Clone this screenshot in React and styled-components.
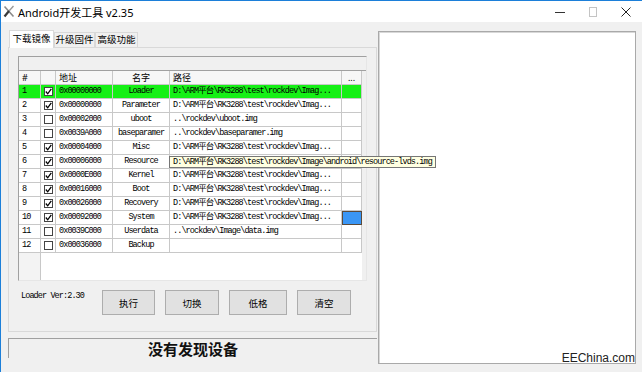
import React from "react";
import styled, { createGlobalStyle } from "styled-components";

const GlobalStyle = createGlobalStyle`
  html, body {
    margin: 0;
    padding: 0;
    background: #f0f0f0;
    overflow: hidden;
  }
`;

const mono = `"Liberation Mono", "Noto Sans CJK SC", monospace`;
const sans = `"Noto Sans", "Noto Sans CJK SC", sans-serif`;

const Window = styled.div`
  width: 642px;
  height: 372px;
  box-sizing: border-box;
  border-top: 1px solid #1c7fd9;
  border-left: 1px solid #1c7fd9;
  background: #f0f0f0;
  display: flex;
  flex-direction: column;
  font-family: ${sans};
`;

const TitleBar = styled.div`
  height: 21px;
  flex-shrink: 0;
  background: #fff;
  display: flex;
  align-items: center;
`;

const Title = styled.span`
  flex: 1;
  margin-left: 3px;
  font-size: 11px;
  color: #000;
`;

const Controls = styled.div`
  display: flex;
`;

const Ctl = styled.div`
  width: 33px;
  height: 21px;
  display: flex;
  align-items: center;
  justify-content: center;
`;

const Body = styled.div`
  flex: 1;
  display: flex;
  padding: 8px 0 0 7px;
`;

const LeftCol = styled.div`
  width: 369px;
  display: flex;
  flex-direction: column;
`;

const TabStrip = styled.div`
  height: 17px;
  display: flex;
  align-items: flex-end;
  padding-left: 1px;
  position: relative;
  z-index: 1;
`;

const Tab = styled.div`
  box-sizing: border-box;
  width: ${p => p.$w}px;
  height: ${p => (p.$active ? 18 : 15)}px;
  margin-bottom: ${p => (p.$active ? -1 : 0)}px;
  background: ${p => (p.$active ? "#fff" : "#f0f0f0")};
  border: 1px solid #d9d9d9;
  border-bottom: none;
  font-size: 9.5px;
  line-height: ${p => (p.$active ? 16 : 13)}px;
  text-align: center;
  color: #000;
`;

const TabPanel = styled.div`
  box-sizing: border-box;
  height: 285px;
  border: 1px solid #d9d9d9;
  background: #f0f0f0;
  padding: 8px 0 0 9px;
`;

const Frame = styled.div`
  box-sizing: border-box;
  width: 349px;
  height: 225px;
  border-top: 1px solid #a0a0a0;
  border-left: 1px solid #a0a0a0;
  border-bottom: 1px solid #e6e6e6;
  border-right: 1px solid #e6e6e6;
  background: #f0f0f0;
  display: flex;
  flex-direction: column;
`;

const TopBand = styled.div`
  height: 13px;
  flex-shrink: 0;
  border-bottom: 1px solid #a0a0a0;
  background: #f0f0f0;
`;

const cols = "22px 15px 57px 57px 172px 20px";

const Row = styled.div`
  display: grid;
  grid-template-columns: ${cols};
  width: 343px;
  height: 14px;
  flex-shrink: 0;
  background: ${p => p.$bg || "#fff"};
`;

const Cell = styled.div`
  position: relative;
  box-sizing: border-box;
  border-right: 1px solid #c8c8c8;
  border-bottom: 1px solid #c8c8c8;
  padding: 0 ${p => (p.$center ? 0 : 3)}px;
  font-family: ${mono};
  font-size: 8.5px;
  letter-spacing: -0.9px;
  line-height: 13px;
  color: #000;
  white-space: nowrap;
  display: flex;
  align-items: center;
  justify-content: ${p => (p.$center ? "center" : "flex-start")};
`;

const HeadCell = styled(Cell)`
  font-family: ${sans};
  font-size: 9px;
  letter-spacing: 0;
  background: #f7f7f7;
`;

const SelCell = styled(Cell)`
  background: #3a96f5;
  outline: 1px solid #5b4a3a;
  outline-offset: -1px;
`;

const Filler = styled.div`
  flex: 1;
  display: grid;
  grid-template-columns: 22px 321px;
  width: 343px;
`;

const FillGray = styled.div`
  box-sizing: border-box;
  background: #f3f3f3;
  border-right: 1px solid #c8c8c8;
`;

const FillWhite = styled.div`
  background: #fff;
`;

const Box = styled.div`
  box-sizing: border-box;
  width: 9px;
  height: 9px;
  border: 1px solid #444;
  background: #fff;
  display: flex;
  align-items: center;
  justify-content: center;
`;

const Tooltip = styled.div`
  position: absolute;
  left: -1px;
  top: 1px;
  z-index: 5;
  box-sizing: border-box;
  height: 12px;
  padding: 0 3px;
  background: #ffffe1;
  border: 1px solid #767676;
  font-family: ${mono};
  font-size: 8.5px;
  letter-spacing: -0.9px;
  line-height: 10px;
  white-space: nowrap;
`;

const BottomRow = styled.div`
  display: flex;
  align-items: flex-start;
  margin-top: 9px;
  padding-left: 3px;
`;

const LoaderVer = styled.span`
  width: 81px;
  margin-top: 1px;
  font-family: ${mono};
  font-size: 8.5px;
  letter-spacing: -0.9px;
  line-height: 10px;
  color: #000;
`;

const Buttons = styled.div`
  display: flex;
  gap: 10px;
`;

const Btn = styled.button`
  box-sizing: border-box;
  width: ${p => p.$w}px;
  height: 25px;
  padding: 0;
  background: #e1e1e1;
  border: 1px solid #adadad;
  font-family: ${sans};
  font-size: 9.5px;
  color: #000;
`;

const Status = styled.div`
  box-sizing: border-box;
  height: 20px;
  margin-top: 6px;
  border-top: 1px solid #a0a0a0;
  border-left: 1px solid #a0a0a0;
  display: flex;
  align-items: center;
  justify-content: center;
  font-family: "Noto Sans CJK SC", sans-serif;
  font-weight: 700;
  font-size: 15px;
  color: #111;
`;

const RightPanel = styled.div`
  position: relative;
  box-sizing: border-box;
  width: 258px;
  height: 333px;
  margin: 1px 0 0 1px;
  background: #fff;
  border: 1px solid #a9a9a9;
  box-shadow: inset 1px 1px 0 #d8d8d8;
`;

const Watermark = styled.span`
  position: absolute;
  right: 0;
  bottom: -2px;
  font-family: "Liberation Sans", sans-serif;
  font-size: 12px;
  color: #222;
`;

const full = "D:\\ARM平台\\RK3288\\test\\rockdev\\Imag...";

const rows = [
  { n: 1, c: true, a: "0x00000000", name: "Loader", path: full, bg: "#16f016" },
  { n: 2, c: true, a: "0x00000000", name: "Parameter", path: full },
  { n: 3, c: false, a: "0x00002000", name: "uboot", path: "..\\rockdev\\uboot.img" },
  { n: 4, c: false, a: "0x0039A000", name: "baseparamer", path: "..\\rockdev\\baseparamer.img" },
  { n: 5, c: true, a: "0x00004000", name: "Misc", path: full },
  { n: 6, c: true, a: "0x00006000", name: "Resource", path: "", tip: "D:\\ARM平台\\RK3288\\test\\rockdev\\Image\\android\\resource-lvds.img" },
  { n: 7, c: true, a: "0x0000E000", name: "Kernel", path: full },
  { n: 8, c: true, a: "0x00016000", name: "Boot", path: full },
  { n: 9, c: true, a: "0x00026000", name: "Recovery", path: full },
  { n: 10, c: true, a: "0x00092000", name: "System", path: full, sel: true },
  { n: 11, c: false, a: "0x0039C000", name: "Userdata", path: "..\\rockdev\\Image\\data.img" },
  { n: 12, c: false, a: "0x00036000", name: "Backup", path: "" }
];

const Check = ({ on }) => (
  <Box>
    {on && (
      <svg width="7" height="7" viewBox="0 0 7 7">
        <path d="M0.8 3.5 L2.7 5.8 L6.3 0.8" fill="none" stroke="#000" strokeWidth="1.3" />
      </svg>
    )}
  </Box>
);

const App = () => {
  return (
    <Window>
      <GlobalStyle />
      <TitleBar>
        <svg width="12" height="13" viewBox="0 0 12 13" style={{ marginLeft: 2 }}>
          <path d="M1.5 1.5 L10.5 11.5" stroke="#8a8a8a" strokeWidth="1.6" />
          <path d="M10.5 1 L6 6" stroke="#9a9a9a" strokeWidth="1.4" />
          <path d="M6 6 L1.5 11.5" stroke="#3a3a3a" strokeWidth="2.2" />
        </svg>
        <Title>Android开发工具 v2.35</Title>
        <Controls>
          <Ctl>
            <svg width="10" height="10" viewBox="0 0 10 10">
              <path d="M0 5.5 H10" stroke="#333" strokeWidth="1" />
            </svg>
          </Ctl>
          <Ctl>
            <svg width="10" height="10" viewBox="0 0 10 10">
              <rect x="1.5" y="0.5" width="7" height="9" fill="none" stroke="#c4c4c4" />
            </svg>
          </Ctl>
          <Ctl>
            <svg width="10" height="10" viewBox="0 0 10 10">
              <path d="M0.5 0.5 L9.5 9.5 M9.5 0.5 L0.5 9.5" stroke="#222" strokeWidth="1" />
            </svg>
          </Ctl>
        </Controls>
      </TitleBar>
      <Body>
        <LeftCol>
          <TabStrip>
            <Tab $active $w={45}>下载镜像</Tab>
            <Tab $w={41}>升级固件</Tab>
            <Tab $w={43}>高级功能</Tab>
          </TabStrip>
          <TabPanel>
            <Frame>
              <TopBand />
              <Row $bg="#f7f7f7">
                <HeadCell>#</HeadCell>
                <HeadCell />
                <HeadCell>地址</HeadCell>
                <HeadCell $center>名字</HeadCell>
                <HeadCell>路径</HeadCell>
                <HeadCell $center>...</HeadCell>
              </Row>
              {rows.map(r => (
                <Row key={r.n} $bg={r.bg}>
                  <Cell>{r.n}</Cell>
                  <Cell $center>
                    <Check on={r.c} />
                  </Cell>
                  <Cell>{r.a}</Cell>
                  <Cell $center>{r.name}</Cell>
                  <Cell>
                    {r.path}
                    {r.tip && <Tooltip>{r.tip}</Tooltip>}
                  </Cell>
                  {r.sel ? <SelCell /> : <Cell />}
                </Row>
              ))}
              <Filler>
                <FillGray />
                <FillWhite />
              </Filler>
            </Frame>
            <BottomRow>
              <LoaderVer>Loader Ver:2.30</LoaderVer>
              <Buttons>
                <Btn $w={53}>执行</Btn>
                <Btn $w={54}>切换</Btn>
                <Btn $w={58}>低格</Btn>
                <Btn $w={54}>清空</Btn>
              </Buttons>
            </BottomRow>
          </TabPanel>
          <Status>没有发现设备</Status>
        </LeftCol>
        <RightPanel>
          <Watermark>EEChina.com</Watermark>
        </RightPanel>
      </Body>
    </Window>
  );
};

export default App;
